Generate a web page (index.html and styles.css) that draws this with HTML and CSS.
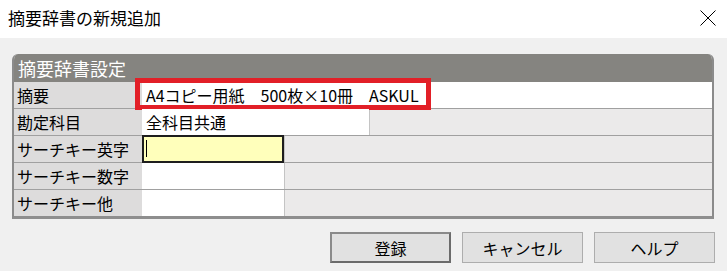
FILE: index.html
```html
<!DOCTYPE html>
<html>
  <head>
    <meta charset="utf-8">
    <title>摘要辞書の新規追加</title>
    <link rel="stylesheet" href="styles.css">
  </head>
  <body>
    <div class="titlebar">
      <span class="title">摘要辞書の新規追加</span>
      <svg class="close" width="16" height="16" viewBox="0 0 16 16">
        <path d="M0.5 0.5 L15.5 15.5 M15.5 0.5 L0.5 15.5" stroke="#000" stroke-width="1" fill="none"/>
      </svg>
    </div>

    <div class="panel">
      <div class="panel-head">摘要辞書設定</div>

      <div class="row">
        <div class="label">摘要</div>
        <div class="cell full">
          A4コピー用紙　500枚×10冊　ASKUL
          <span class="mark"></span>
        </div>
      </div>

      <div class="row">
        <div class="label">勘定科目</div>
        <div class="cell mid">全科目共通</div>
        <div class="rest"></div>
      </div>

      <div class="row">
        <div class="label">サーチキー英字</div>
        <div class="cell short focus"><span class="caret"></span></div>
        <div class="rest"></div>
      </div>

      <div class="row">
        <div class="label">サーチキー数字</div>
        <div class="cell short"></div>
        <div class="rest"></div>
      </div>

      <div class="row last">
        <div class="label">サーチキー他</div>
        <div class="cell short"></div>
        <div class="rest"></div>
      </div>
    </div>

    <div class="actions">
      <button class="btn default">登録</button>
      <button class="btn">キャンセル</button>
      <button class="btn">ヘルプ</button>
    </div>
  </body>
</html>
```

FILE: styles.css
```css
/* ベース */
body {
    margin: 0;
    background-color: #f0f0f0;
    font-family: "Noto Sans CJK JP", "Noto Sans", sans-serif;
    color: #000;
}

/* タイトルバー */
.titlebar {
    height: 38px;
    background-color: #fff;
    display: flex;
    align-items: center;
    justify-content: space-between;
    padding: 0 11px 0 8px;
}

.title {
    font-size: 17px;
    line-height: 20px;
    margin-top: -3px;
}

.close {
    margin-top: -3px;
}

/* 設定パネル */
.panel {
    margin: 16px 13px 0 12px;
    border-left: 2px solid #8b8b8b;
    border-right: 2px solid #8b8b8b;
    border-bottom: 3px solid #8e8e8e;
    border-radius: 6px 6px 0 0;
    overflow: hidden;
}

.panel-head {
    height: 28px;
    line-height: 28px;
    background-color: #858480;
    color: #fff;
    font-size: 18px;
    padding-left: 4px;
}

.row {
    display: flex;
    height: 26px;
    border-bottom: 1px solid #a0a0a0;
    font-size: 16px;
    line-height: 26px;
}

.row.last {
    border-bottom: none;
}

.label {
    width: 125px;
    flex: none;
    padding-left: 3px;
    background-color: #dddcdc;
    white-space: nowrap;
}

.cell {
    position: relative;
    flex: none;
    padding-left: 4px;
    background-color: #fff;
    white-space: nowrap;
    box-sizing: border-box;
}

.cell.full {
    flex: 1;
}

.cell.mid {
    width: 227px;
}

.cell.short {
    width: 142px;
}

.cell.focus {
    background-color: #ffffbb;
    border: 2px solid #1e1e1e;
    margin-top: -1px;
    height: 28px;
}

.caret {
    position: absolute;
    left: 2px;
    top: 3px;
    width: 1px;
    height: 17px;
    background-color: #000;
}

.rest {
    flex: 1;
    background-color: #ebeaea;
    border-left: 1px solid #c4c4c4;
}

/* 赤枠 */
.mark {
    position: absolute;
    left: -7px;
    top: -4px;
    width: 296px;
    height: 32px;
    border: 5px solid #e21f27;
    box-sizing: border-box;
}

/* ボタン */
.actions {
    display: flex;
    justify-content: flex-end;
    gap: 11px;
    margin: 13px 12px 0 0;
}

.btn {
    width: 121px;
    height: 31px;
    background-color: #e1e1e1;
    border: 1px solid #adadad;
    font-family: "Noto Sans CJK JP", "Noto Sans", sans-serif;
    font-size: 16px;
    line-height: 20px;
    padding: 0;
    color: #000;
}

.btn.default {
    border: 2px solid #8a8a8a;
    border-right-color: #6b6b6b;
    border-bottom-color: #6b6b6b;
}
```
